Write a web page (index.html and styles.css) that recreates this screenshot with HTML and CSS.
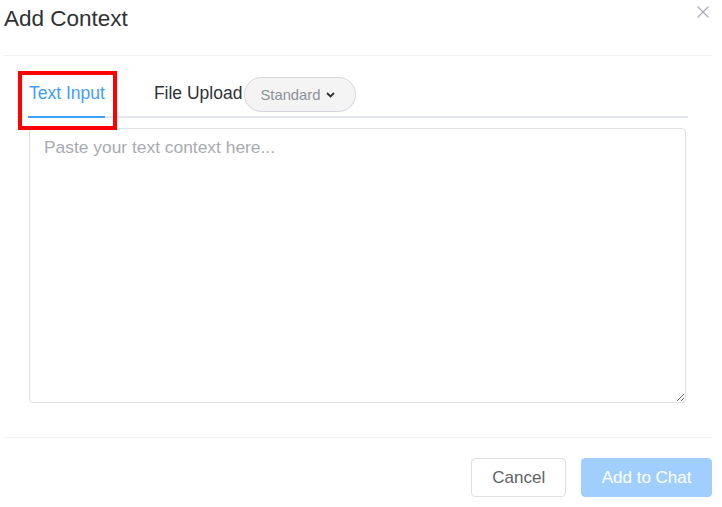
FILE: index.html
```html
<!DOCTYPE html>
<html lang="en">
<head>
<meta charset="utf-8">
<title>Add Context</title>
<link rel="stylesheet" href="styles.css">
</head>
<body>
<div class="page">
  <div class="dialog">
    <header class="dialog-header">
      <h2 class="dialog-title">Add Context</h2>
      <button class="dialog-close" aria-label="Close">
        <svg width="12" height="12" viewBox="0 0 12 12"><path d="M0.5 0.5 L11.5 11.5 M11.5 0.5 L0.5 11.5" stroke="#a8abb2" stroke-width="1.1" fill="none"/></svg>
      </button>
    </header>
    <div class="dialog-body">
      <div class="tabs-nav">
        <div class="tab tab-active">Text Input</div>
        <div class="tab tab-upload">File Upload<span class="pill">Standard<svg class="chev" width="9" height="6" viewBox="0 0 9 6"><path d="M1 1 L4.5 4.5 L8 1" stroke="#303133" stroke-width="1.8" fill="none"/></svg></span></div>
      </div>
      <textarea class="context-input" placeholder="Paste your text context here..."></textarea>
    </div>
    <footer class="dialog-footer">
      <button class="btn btn-default">Cancel</button>
      <button class="btn btn-primary">Add to Chat</button>
    </footer>
  </div>
  <div class="highlight"></div>
</div>
</body>
</html>
```

FILE: styles.css
```css
* { box-sizing: border-box; }
html, body { margin: 0; padding: 0; background: #fff; }
body { font-family: "Liberation Sans", Arial, sans-serif; color: #303133; }
.page { position: relative; width: 722px; height: 507px; overflow: hidden; }
.dialog { margin-left: 3px; width: 709px; height: 507px; display: flex; flex-direction: column; }
.dialog-header { position: relative; height: 56px; border-bottom: 1px solid #f0f2f5; padding-top: 6px; }
.dialog-title { margin: 0 0 0 1px; font-size: 22.5px; font-weight: normal; line-height: 26px; color: #303133; }
.dialog-close { position: absolute; top: 6px; right: 3px; width: 12px; height: 12px; padding: 0; border: 0; background: none; display: block; }
.dialog-close svg { display: block; }
.dialog-body { padding: 14px 24px 34px 25px; }
.tabs-nav { display: flex; height: 48px; border-bottom: 2px solid #e4e7ed; }
.tab { display: flex; align-items: center; font-size: 17.5px; color: #303133; margin-bottom: -2px; border-bottom: 2px solid transparent; }
.tab-active { color: #409eff; border-bottom-color: #409eff; padding-left: 1px; }
.tab-upload { margin-left: 49px; }
.pill { display: inline-flex; align-items: center; margin-left: 2px; margin-top: 3px; height: 35px; width: 112px; padding-left: 15px; border: 1px solid #d4d7de; border-radius: 18px; background: #f4f4f5; font-size: 14.8px; color: #8d9199; }
.chev { margin-left: 6px; }
.context-input { display: block; margin: 10px 0 0 1px; width: 657px; height: 275px; padding: 5px 14px; border: 1px solid #dcdfe6; border-radius: 4px; font-family: "Liberation Sans", Arial, sans-serif; font-size: 17.4px; line-height: 1.5; color: #606266; resize: both; outline: none; }
.context-input::placeholder { color: #a8abb2; }
.dialog-footer { border-top: 1px solid #f0f2f5; padding-top: 20px; display: flex; justify-content: flex-end; gap: 15px; }
.btn { height: 39px; padding: 0 20px; font-family: "Liberation Sans", Arial, sans-serif; font-size: 17px; border-radius: 4px; border: 1px solid #dcdfe6; background: #fff; color: #606266; }
.btn-primary { padding: 0 19.5px; background: #a0cfff; border-color: #a0cfff; color: #fff; }
.highlight { position: absolute; left: 18px; top: 71px; width: 99px; height: 59px; border: 4px solid #ff0000; }
```
